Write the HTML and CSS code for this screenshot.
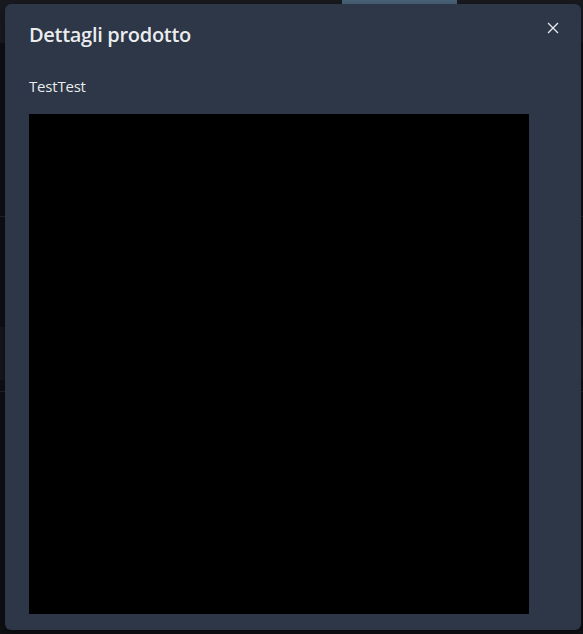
FILE: index.html
```html
<!DOCTYPE html>
<html lang="it">
<head>
  <meta charset="UTF-8">
  <meta name="viewport" content="width=device-width, initial-scale=1.0">
  <title>Dettagli prodotto</title>
  <link rel="stylesheet" href="styles.css">
</head>
<body>
  <div class="page">
    <header class="topbar">
      <span class="tab active"></span>
    </header>
    <div class="row first"></div>
    <div class="row plain"></div>
    <div class="row soft"></div>
    <div class="row last"></div>
  </div>

  <div class="overlay">
    <section class="modal">
      <button class="close" aria-label="Chiudi">
        <svg viewBox="0 0 24 24" width="12" height="12">
          <path d="M3 3 L21 21 M21 3 L3 21" stroke="currentColor" stroke-width="2.6" stroke-linecap="square" fill="none"/>
        </svg>
      </button>
      <h2 class="modal-title">Dettagli prodotto</h2>
      <div class="modal-body">
        <p class="name">TestTest</p>
        <div class="preview"></div>
      </div>
    </section>
  </div>
</body>
</html>
```

FILE: styles.css
```css
body {
  margin: 0;
  font-family: 'Open Sans', 'Noto Sans', sans-serif;
  background-color: #0e1014;
  color: rgba(255, 255, 255, 0.92);
  height: 634px;
  overflow: hidden;
}
.page {
  height: 634px;
}
.topbar {
  height: 43px;
  background-color: #181a20;
  padding-left: 342px;
}
.tab {
  display: block;
  width: 115px;
  height: 4px;
  background-color: #4a6478;
}
.row.first {
  height: 173px;
  border-bottom: 1px solid #23252b;
}
.row.plain {
  height: 110px;
}
.row.soft {
  height: 53px;
  background-color: #15171c;
}
.row.last {
  height: 11px;
  border-bottom: 1px solid #23252b;
}
.overlay {
  position: absolute;
  inset: 0;
  padding: 4px 2px 4px 5px;
}
.modal {
  position: relative;
  width: 576px;
  height: 626px;
  box-sizing: border-box;
  background-color: #2d3748;
  border-radius: 6px;
  box-shadow: 0 4px 12px rgba(0, 0, 0, 0.4);
}
.modal-title {
  margin: 0;
  padding: 16px 24px;
  font-size: 20px;
  font-weight: 600;
  line-height: 30px;
  letter-spacing: -0.3px;
}
.close {
  position: absolute;
  top: 8px;
  right: 12px;
  width: 32px;
  height: 32px;
  display: flex;
  align-items: center;
  justify-content: center;
  padding: 0;
  border: none;
  border-radius: 6px;
  background: transparent;
  color: #e8e9ec;
  cursor: pointer;
}
.modal-body {
  padding: 8px 24px 16px;
}
.name {
  margin: 0 0 16px;
  font-size: 15px;
  line-height: 24px;
  letter-spacing: -0.2px;
}
.preview {
  width: 500px;
  height: 500px;
  background-color: #000;
}
```
